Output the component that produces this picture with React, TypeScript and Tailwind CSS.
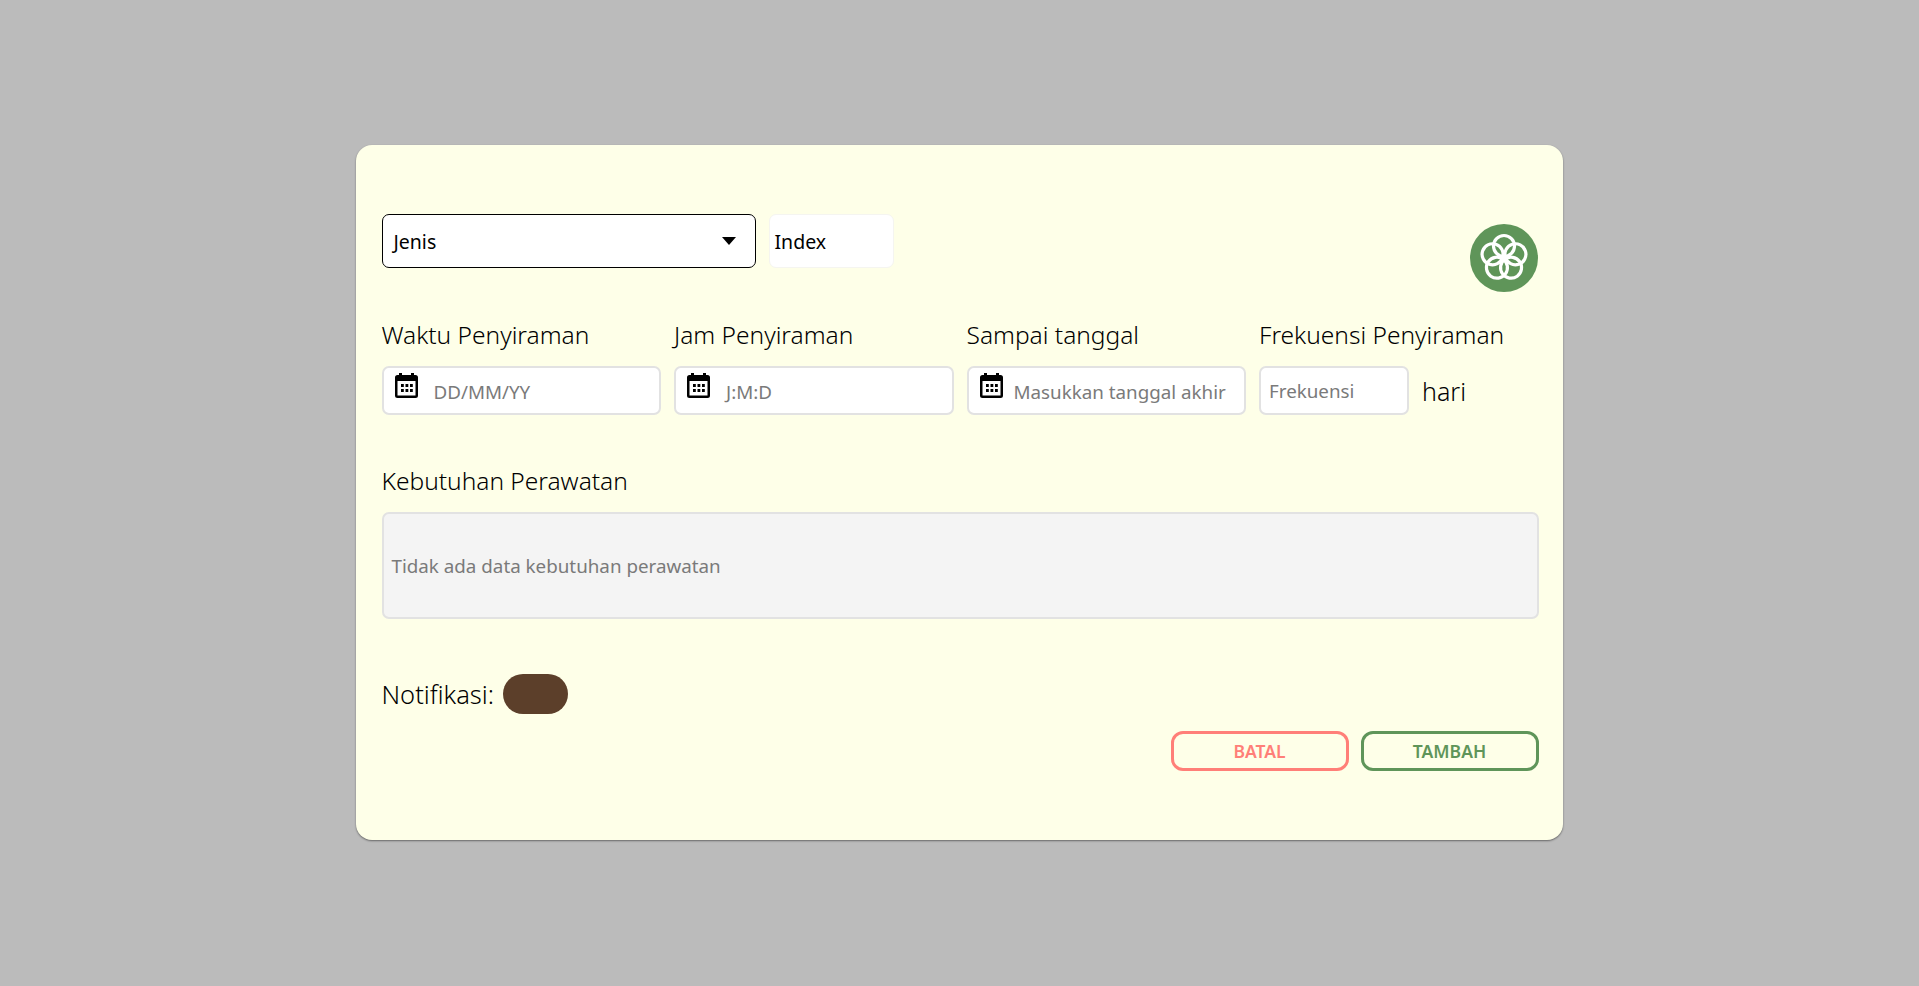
const Cal = () => (
  <svg viewBox="0 0 23 25" className="w-[23px] h-[25px] shrink-0">
    <path fill="#000" d="M4 0h3v2h9V0h3v2h1.500A2.500 2.500 0 0 1 23 4.500V22.500A2.500 2.500 0 0 1 20.500 25H2.500A2.500 2.500 0 0 1 0 22.500V4.500A2.500 2.500 0 0 1 2.500 2H4z" />
    <rect x="2.500" y="8" width="18" height="14.500" fill="#fff" />
    {[6, 10.5, 15].map((x) =>
      [11, 16].map((y) => <rect key={`${x}-${y}`} x={x} y={y} width="2.800" height="3" fill="#000" />)
    )}
  </svg>
);

const Logo = () => (
  <div className="w-[68px] h-[68px] mr-px rounded-full bg-[#5f9559] flex items-center justify-center mt-[9.5px]">
    <svg viewBox="0 0 68 68" className="w-[68px] h-[68px]">
      {[0, 72, 144, 216, 288].map((a) => (
        <circle key={a} cx="34" cy="22" r="10.500" fill="none" stroke="#fff" strokeWidth="3.200" transform={`rotate(${a} 34 34)`} />
      ))}
      <circle cx="34" cy="34" r="2.500" fill="#fff" />
    </svg>
  </div>
);

const Field = ({ label, placeholder, pad }: { label: string; placeholder: string; pad: string }) => (
  <div className="w-[279.5px]">
    <div className="h-[48px] text-[24.5px] leading-[34px] text-black font-light">{label}</div>
    <div className={`h-[49px] bg-white border-2 border-[#e2e2e2] rounded-[7px] flex items-start pt-[5px] pl-[11px] ${pad}`}>
      <Cal />
      <span className="text-[18.8px] leading-[38px] text-[#7a7a7a]">{placeholder}</span>
    </div>
  </div>
);

export default function App() {
  return (
    <div className="w-full h-[986px] bg-[#bbbbbb] flex items-start justify-center pt-[145px] font-['Noto_Sans','Open_Sans',sans-serif]">
      <div className="w-[1207px] h-[695px] bg-[#feffe8] rounded-[16px] shadow-[0_1px_2px_rgba(0,0,0,0.45)] pl-[25.5px] pr-[24.5px] pt-[69px]">
        <div className="h-[104px] flex items-start">
          <div className="w-[374px] h-[54px] bg-white border border-black rounded-[7px] flex items-center justify-between pl-[11px] pr-[19px] text-[19.5px] text-black">
            <span className="mt-px">Jenis</span>
            <svg viewBox="0 0 14 8" className="w-[14px] h-[8px]"><path d="M0 0h14L7 8z" fill="#000" /></svg>
          </div>
          <div className="w-[125px] h-[54px] ml-[13px] bg-white border border-[#f5f5f0] rounded-[7px] flex items-center pl-[5px] text-[19.5px] text-black">
            <span className="mt-px">Index</span>
          </div>
          <div className="flex-1 flex justify-end"><Logo /></div>
        </div>
        <div className="flex gap-[13px]">
          <Field label="Waktu Penyiraman" placeholder="DD/MM/YY" pad="gap-[16px]" />
          <Field label="Jam Penyiraman" placeholder="J:M:D" pad="gap-[16px]" />
          <Field label="Sampai tanggal" placeholder="Masukkan tanggal akhir" pad="gap-[11px]" />
          <div className="w-[279.5px]">
            <div className="h-[48px] text-[24.5px] leading-[34px] text-black font-light">Frekuensi Penyiraman</div>
            <div className="flex items-center">
              <div className="w-[150px] h-[49px] bg-white border-2 border-[#e2e2e2] rounded-[7px] flex items-center pl-[8px] text-[18.8px] text-[#7a7a7a]">
                <span className="mt-px">Frekuensi</span>
              </div>
              <span className="ml-[13px] mt-[2px] text-[25px] text-black font-light">hari</span>
            </div>
          </div>
        </div>
        <div className="mt-[49px] h-[48px] text-[24.5px] leading-[34px] text-black font-light">Kebutuhan Perawatan</div>
        <div className="h-[107px] bg-[#f4f4f4] border-2 border-[#e2e2e2] rounded-[7px] flex items-center pl-[8px] text-[18.8px] text-[#7a7a7a]">
          <span className="mt-px">Tidak ada data kebutuhan perawatan</span>
        </div>
        <div className="mt-[55px] flex items-center">
          <span className="text-[25.5px] text-black font-light">Notifikasi:</span>
          <div className="w-[65px] h-[40px] ml-[9px] rounded-[20px] bg-[#5c3f2a]" />
        </div>
        <div className="mt-[17px] flex justify-end gap-[12px]">
          <button className="w-[178px] h-[40px] border-[3px] border-[#ff7f78] rounded-[12px] text-[17.5px] font-semibold text-[#ff7f78]">BATAL</button>
          <button className="w-[178px] h-[40px] border-[3px] border-[#5f9559] rounded-[12px] text-[17.5px] font-semibold text-[#5f9559]">TAMBAH</button>
        </div>
      </div>
    </div>
  );
}
